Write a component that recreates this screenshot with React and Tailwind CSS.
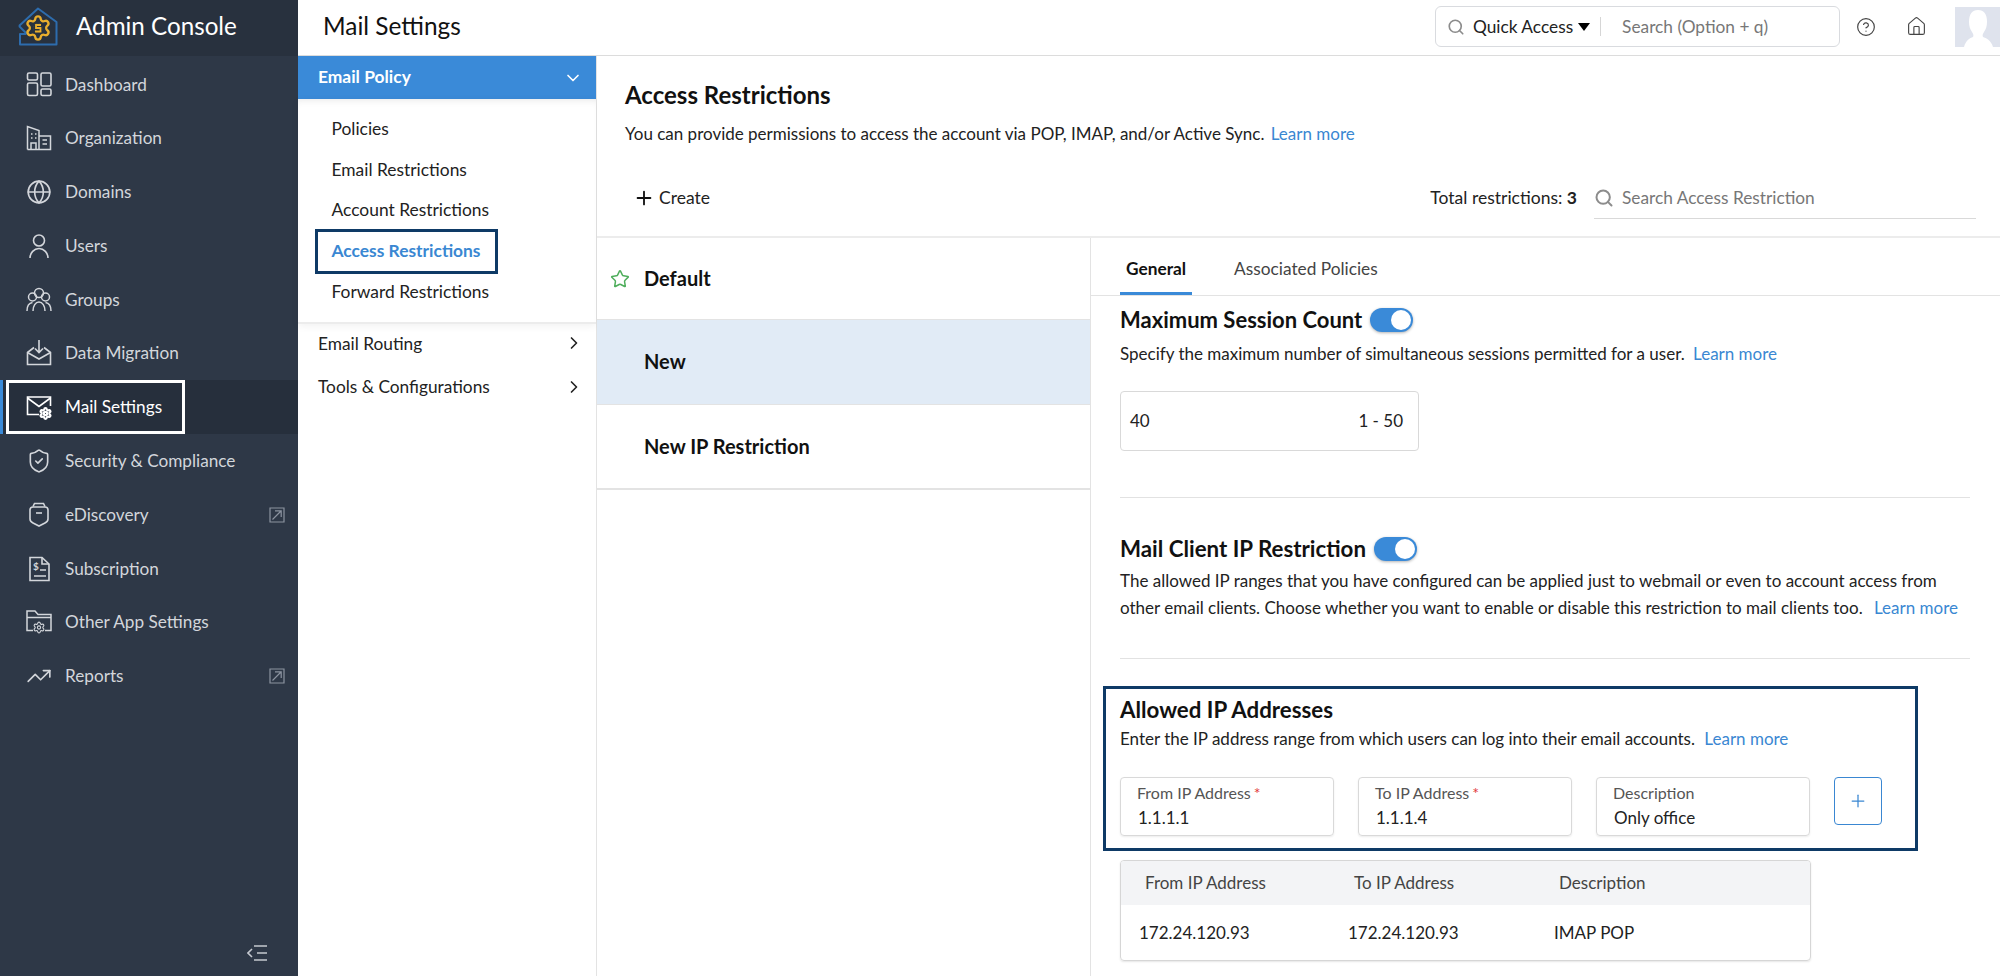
import { Globe, ShieldCheck, TrendingUp, ChevronDown, ChevronRight, Search, Plus, Star, House, CircleHelp, Settings } from 'lucide-react'

// sidebar icons that lucide doesn't have in this shape
function DashIcon() {
  return (
    <svg width="26" height="26" viewBox="0 0 26 26" fill="none" stroke="currentColor" strokeWidth="1.6">
      <rect x="1.5" y="2" width="10" height="7" rx="1.5" />
      <rect x="15" y="2" width="10" height="13" rx="1.5" />
      <rect x="1.5" y="12" width="10" height="12.5" rx="1.5" />
      <rect x="15" y="18" width="10" height="6.5" rx="1.5" />
    </svg>
  )
}

function OrgIcon() {
  return (
    <svg width="26" height="26" viewBox="0 0 26 26" fill="none" stroke="currentColor" strokeWidth="1.5">
      <path d="M1.500 24.500V1.500L13 5.500V24.500M13 11h11.500v13.500H1.500" />
      <path d="M5 9h1.500M9 9h1.500M5 13h1.500M9 13h1.500M16.500 15h4.500M16.500 19h4.500M5 24.500V18h5v6.500" />
    </svg>
  )
}

function UserIcon() {
  return (
    <svg width="26" height="26" viewBox="0 0 26 26" fill="none" stroke="currentColor" strokeWidth="1.6">
      <circle cx="13" cy="7.5" r="5.5" />
      <path d="M4 25c0-5 4-9.5 9-9.5s9 4.5 9 9.5" />
    </svg>
  )
}

function GroupIcon() {
  return (
    <svg width="26" height="26" viewBox="0 0 26 26" fill="none" stroke="currentColor" strokeWidth="1.5">
      <circle cx="13" cy="6" r="4.5" />
      <circle cx="6.5" cy="10" r="4" />
      <circle cx="19.5" cy="10" r="4" />
      <path d="M1 24c0-5 2-8 5.500-8.500M25 24c0-5-2-8-5.500-8.500M7 24c0-5 2.500-9 6-9s6 4 6 9" />
    </svg>
  )
}

function MigrationIcon() {
  return (
    <svg width="26" height="26" viewBox="0 0 26 26" fill="none" stroke="currentColor" strokeWidth="1.6">
      <path d="M8 7.500 1.500 12.500V24.500H24.500V12.500L18 7.500" />
      <path d="M1.500 12.500 13 19l11.500-6.500" />
      <path d="M13 0v12M9 8.500l4 4 4-4" />
    </svg>
  )
}

function MailGearIcon() {
  return (
    <svg width="26" height="26" viewBox="0 0 26 26" fill="none" stroke="currentColor" strokeWidth="1.6">
      <path d="M13 20.500H1.500V3h23v9" />
      <path d="M1.500 4 13 12.500 24.500 4" />
      <Settings x="13" y="13" width="13" height="13" strokeWidth="4" />
    </svg>
  )
}

function DiscoveryIcon() {
  return (
    <svg width="26" height="26" viewBox="0 0 26 26" fill="none" stroke="currentColor" strokeWidth="1.6">
      <path d="M7 4.500 8.500 1.500h9L19 4.500" />
      <path d="M4 8c0-2 1-3 3-3h12c2 0 3 1 3 3v9c0 2-1 3-3 4l-6 3-6-3c-2-1-3-2-3-4z" />
      <path d="M10 11h6" />
    </svg>
  )
}

function SubIcon() {
  return (
    <svg width="26" height="26" viewBox="0 0 26 26" fill="none" stroke="currentColor" strokeWidth="1.6">
      <path d="M4 1.500h12l7 6.500v16.500H4z" />
      <path d="M16 1.500V8h7M14 14h6M8 20h12" />
      <text x="7" y="14" fontSize="10" fontWeight="700" fill="currentColor" stroke="none">$</text>
    </svg>
  )
}

function FolderGearIcon() {
  return (
    <svg width="26" height="26" viewBox="0 0 26 26" fill="none" stroke="currentColor" strokeWidth="1.5">
      <path d="M7 21.500H1V2h8l3 3.500h13v16h-6" />
      <path d="M1 8.500h24" />
      <Settings x="6.500" y="12" width="13" height="13" strokeWidth="2" />
    </svg>
  )
}

function LaunchIcon() {
  return (
    <svg width="16" height="16" viewBox="0 0 16 16" fill="none" stroke="#8b93a0" strokeWidth="1.2">
      <path d="M1 1h14v14H1z" />
      <path d="M3.500 12.500 12 4M6 3.800h6.200V10" />
    </svg>
  )
}

function Logo() {
  return (
    <svg width="40" height="40" viewBox="0 0 40 40" fill="none" className="shrink-0">
      <path d="M1 19 20 1.500 38.500 15v22.500H2V27l6 0" stroke="#2d6cad" strokeWidth="2" strokeLinejoin="round" />
      <path d="M1 19 9 27" stroke="#2d6cad" strokeWidth="2" />
      <Settings x="6" y="7" width="28" height="28" stroke="#e9ae2d" strokeWidth="2" />
      <circle cx="20" cy="21" r="5" fill="#28313e" />
      <path d="M23 18h-5v3h4.500v3.500H17" stroke="#e9ae2d" strokeWidth="1.800" />
    </svg>
  )
}

function AvatarIcon() {
  return (
    <svg width="45" height="40" viewBox="0 0 45 40" className="shrink-0">
      <rect width="45" height="40" fill="#dfe3ed" />
      <path d="M9 40c2-7 6-9 9-10 1-2 0-3-1-5-2-3-3-6-3-10C14 7 17 3 23 3s9 4 9 12c0 4-1 7-3 10-1 2-2 3-1 5 3 1 8 3 10 10z" fill="#fff" />
    </svg>
  )
}

const navItems = [
  { label: 'Dashboard', Icon: DashIcon },
  { label: 'Organization', Icon: OrgIcon },
  { label: 'Domains', Icon: Globe },
  { label: 'Users', Icon: UserIcon },
  { label: 'Groups', Icon: GroupIcon },
  { label: 'Data Migration', Icon: MigrationIcon },
  { label: 'Mail Settings', Icon: MailGearIcon, active: true },
  { label: 'Security & Compliance', Icon: ShieldCheck },
  { label: 'eDiscovery', Icon: DiscoveryIcon, external: true },
  { label: 'Subscription', Icon: SubIcon },
  { label: 'Other App Settings', Icon: FolderGearIcon },
  { label: 'Reports', Icon: TrendingUp, external: true },
]

function Sidebar() {
  return (
    <aside className="flex h-full w-[298px] shrink-0 flex-col bg-[#2e3847] text-[#d3d6db]">
      <div className="flex h-[56px] items-center gap-[18px] bg-[#28313e] pl-[18px] pb-[3px]">
        <Logo />
        <span className="text-[24.2px] text-white">Admin Console</span>
      </div>
      <nav className="pt-[1.5px]">
        {navItems.map(({ label, Icon, active, external }) => (
          <div
            key={label}
            className={`relative flex h-[53.8px] items-center pl-[26px] pr-[13px] text-[17.2px] ${active ? 'bg-[#262f3c] text-white' : ''}`}
          >
            {active && <div className="absolute left-0 top-0 h-full w-[3px] bg-[#3a8ad8]" />}
            {active && <div className="absolute left-[6px] top-0 h-full w-[179px] border-[3px] border-white" />}
            <Icon size={26} strokeWidth={1.5} />
            <span className="ml-[13px] flex-1">{label}</span>
            {external && <LaunchIcon />}
          </div>
        ))}
      </nav>
      <div className="mt-auto flex justify-end pr-[31px] pb-[15px] text-[#c5c9d0]">
        <svg width="20" height="16" viewBox="0 0 20 16" fill="none" stroke="currentColor" strokeWidth="1.6">
          <path d="M7 1h13M10 8h10M7 15h13M5 4 1 8l4 4" />
        </svg>
      </div>
    </aside>
  )
}

function TopBar() {
  return (
    <header className="flex h-[56px] shrink-0 items-center border-b border-[#dcdcdc] bg-white pl-[25px] pb-[2px]">
      <h1 className="text-[24.4px] text-[#111]">Mail Settings</h1>
      <div className="ml-auto flex h-[41px] w-[405px] items-center rounded-md border border-[#d9dbdf] pl-[11px] text-[17.3px]">
        <Search size={18} strokeWidth={2.2} className="text-[#8c8c8c]" />
        <span className="ml-[8px] text-[#222]">Quick Access</span>
        <span className="ml-[5px] mt-[1px] border-x-[6px] border-t-[8px] border-x-transparent border-t-black" />
        <span className="ml-[10px] h-[19px] w-px bg-[#d6d6d6]" />
        <span className="ml-[21px] text-[#777]">Search (Option + q)</span>
      </div>
      <CircleHelp size={20} strokeWidth={1.4} className="ml-[16px] text-[#444]" />
      <House size={21} strokeWidth={1.3} className="ml-[30px] text-[#444]" />
      <div className="ml-[28px]"><AvatarIcon /></div>
    </header>
  )
}

function SubNav() {
  const subItems = ['Policies', 'Email Restrictions', 'Account Restrictions', 'Access Restrictions', 'Forward Restrictions']
  return (
    <div className="flex h-full w-[299px] shrink-0 flex-col border-r border-[#e3e3e3] bg-white text-[#222]">
      <div className="flex h-[43px] items-center justify-between bg-[#3a8ad8] pl-[20px] pr-[13px] text-[17.4px] font-bold text-white">
        Email Policy
        <ChevronDown size={20} strokeWidth={2} />
      </div>
      <div className="border-b-2 border-[#ececec] pt-[10px] pb-[10px] text-[17.4px] shadow-[inset_0_6px_8px_-6px_rgba(0,0,0,0.12),0_2px_8px_rgba(0,0,0,0.06)]">
        {subItems.map((s) => (
          <div key={s} className="relative flex h-[40.6px] items-center pl-[33.5px]">
            {s === 'Access Restrictions' ? (
              <>
                <div className="absolute left-[17px] top-[-2px] h-[45px] w-[183px] border-[3px] border-[#0e3a66]" />
                <span className="font-bold text-[#3a87d2]">{s}</span>
              </>
            ) : s}
          </div>
        ))}
      </div>
      <div className="flex h-[43px] items-center justify-between pl-[20px] pr-[12px] pb-[4px] text-[17.3px]">
        Email Routing
        <ChevronRight size={20} strokeWidth={2} />
      </div>
      <div className="flex h-[43px] items-center justify-between pl-[20px] pr-[12px] pb-[3px] text-[17.3px]">
        Tools &amp; Configurations
        <ChevronRight size={20} strokeWidth={2} />
      </div>
    </div>
  )
}

function Toggle({ className = '' }) {
  return (
    <span className={`relative inline-block h-[24px] w-[43px] rounded-full bg-[#3a8ad8] shadow-[0_1px_3px_rgba(0,0,0,0.3)] ${className}`}>
      <span className="absolute right-[2px] top-[2px] h-[20px] w-[20px] rounded-full bg-white" />
    </span>
  )
}

function LearnMore({ className = '' }) {
  return <span className={`text-[#3a87d2] ${className}`}>Learn more</span>
}

function Field({ label, value, required, className = '' }) {
  return (
    <div className={`h-[59px] w-[214px] rounded-[4px] border border-[#d9d9d9] pl-[16px] pt-[3px] shadow-[0_1px_2px_rgba(0,0,0,0.08)] ${className}`}>
      <div className="text-[16px] leading-[24px] text-[#555]">
        {label}
        {required && <span className="ml-[3px] text-[#e23a3a]">*</span>}
      </div>
      <div className="pl-px text-[17px] leading-[25px] text-[#222]">{value}</div>
    </div>
  )
}

function GeneralTab() {
  return (
    <div className="flex-1 pl-[29px] pr-[30px]">
      <div className="flex h-[47px] items-center gap-[8px] text-[22px] font-bold leading-none text-[#111]">
        Maximum Session Count <Toggle />
      </div>
      <p className="text-[17px] leading-[22px] text-[#222]">
        Specify the maximum number of simultaneous sessions permitted for a user. <LearnMore className="ml-[4px]" />
      </p>
      <div className="mt-[26px] flex h-[60px] w-[299px] items-center justify-between rounded-[4px] border border-[#d9d9d9] pl-[9px] pr-[15px] text-[17px] text-[#222]">
        <span>40</span>
        <span>1 - 50</span>
      </div>
      <hr className="mt-[46px] border-[#e2e2e2]" />
      <div className="mt-[37px] flex items-center gap-[8px] text-[22.3px] font-bold leading-[28px] text-[#111]">
        Mail Client IP Restriction <Toggle />
      </div>
      <p className="mt-[4px] text-[17px] leading-[27px] text-[#222]">
        The allowed IP ranges that you have configured can be applied just to webmail or even to account access from
        <br />
        other email clients. Choose whether you want to enable or disable this restriction to mail clients too. <LearnMore className="ml-[7px]" />
      </p>
      <hr className="mt-[37px] border-[#e2e2e2]" />
      <div className="-ml-[17px] mt-[27px] h-[165px] w-[815px] border-[3px] border-[#0e3a66] pl-[14px] pt-[7px]">
        <div className="text-[22.3px] font-bold leading-[28px] text-[#111]">Allowed IP Addresses</div>
        <p className="mt-[3px] text-[17px] leading-[24px] text-[#222]">
          Enter the IP address range from which users can log into their email accounts. <LearnMore className="ml-[5px]" />
        </p>
        <div className="mt-[26px] flex items-start">
          <Field label="From IP Address" value="1.1.1.1" required />
          <Field label="To IP Address" value="1.1.1.4" required className="ml-[24px]" />
          <Field label="Description" value="Only office" className="ml-[24px]" />
          <div className="ml-[24px] flex h-[48px] w-[48px] items-center justify-center rounded-[4px] border border-[#3a87d2] text-[#3a87d2]">
            <Plus size={20} strokeWidth={1.5} />
          </div>
        </div>
      </div>
      <div className="mt-[9px] w-[691px] overflow-hidden rounded-[4px] border border-[#d6d6d6] text-[17px] shadow-[0_1px_2px_rgba(0,0,0,0.1)]">
        <div className="flex h-[44px] items-center bg-[#f3f4f6] pl-[24px] text-[#444]">
          <span className="w-[209px]">From IP Address</span>
          <span className="w-[205px]">To IP Address</span>
          <span>Description</span>
        </div>
        <div className="flex h-[55px] items-center pl-[18px] text-[#222]">
          <span className="w-[209px]">172.24.120.93</span>
          <span className="w-[206px]">172.24.120.93</span>
          <span>IMAP POP</span>
        </div>
      </div>
    </div>
  )
}

function MainPanel() {
  const rows = ['Default', 'New', 'New IP Restriction']
  return (
    <main className="flex h-full min-w-0 flex-1 flex-col bg-white text-[#111]">
      <div className="h-[182px] shrink-0 border-b-2 border-[#ececec] pl-[28px] pr-[24px]">
        <h2 className="pt-[23px] text-[24px] font-bold leading-[32px]">Access Restrictions</h2>
        <p className="mt-[11px] text-[17px] leading-[24px] text-[#222]">
          You can provide permissions to access the account via POP, IMAP, and/or Active Sync. <LearnMore className="ml-[2px]" />
        </p>
        <div className="mt-[31px] flex h-[42px] items-center">
          <div className="ml-[8px] flex items-center text-[17.5px] text-[#222]">
            <Plus size={22} strokeWidth={2} className="mr-[4px] text-[#111]" /> Create
          </div>
          <div className="ml-auto text-[17.5px] text-[#222]">
            Total restrictions: <span className="font-bold">3</span>
          </div>
          <div className="ml-[17px] flex h-[42px] w-[382px] items-center border-b border-[#d9d9d9] text-[17.3px] text-[#777]">
            <Search size={20} strokeWidth={2.4} className="mr-[8px] text-[#8c8c8c]" />
            Search Access Restriction
          </div>
        </div>
      </div>
      <div className="flex min-h-0 flex-1">
        <div className="w-[494px] shrink-0 border-r border-[#e3e3e3]">
          {rows.map((r) => (
            <div
              key={r}
              className={`relative flex items-center border-b border-[#e3e3e3] pl-[47px] pb-[2px] text-[20px] font-bold text-[#111] last:border-b-2 ${r === 'Default' ? 'h-[82px]' : 'h-[85px]'} ${r === 'New' ? 'bg-[#e1ebf6]' : ''}`}
            >
              {r === 'Default' && (
                <Star size={20} strokeWidth={1.8} className="absolute left-[13px] top-[31px] text-[#4fae5c]" />
              )}
              {r}
            </div>
          ))}
        </div>
        <div className="flex min-w-0 flex-1 flex-col">
          <div className="flex h-[58px] shrink-0 items-end gap-[48px] border-b border-[#e3e3e3] pl-[35px] text-[17.3px]">
            <span className="relative flex h-[58px] flex-col items-center pt-[19px] font-bold text-[#111]">
              General
              <span className="absolute -left-[6px] -right-[6px] bottom-0 h-[3px] bg-[#3a8ad8]" />
            </span>
            <span className="flex h-[58px] items-start pt-[19px] text-[#444]">Associated Policies</span>
          </div>
          <GeneralTab />
        </div>
      </div>
    </main>
  )
}

export default function App() {
  return (
    <div className="flex h-[976px] w-[2000px] overflow-hidden bg-white font-['Lato',sans-serif]">
      <Sidebar />
      <div className="flex h-full min-w-0 flex-1 flex-col">
        <TopBar />
        <div className="flex min-h-0 flex-1">
          <SubNav />
          <MainPanel />
        </div>
      </div>
    </div>
  )
}
